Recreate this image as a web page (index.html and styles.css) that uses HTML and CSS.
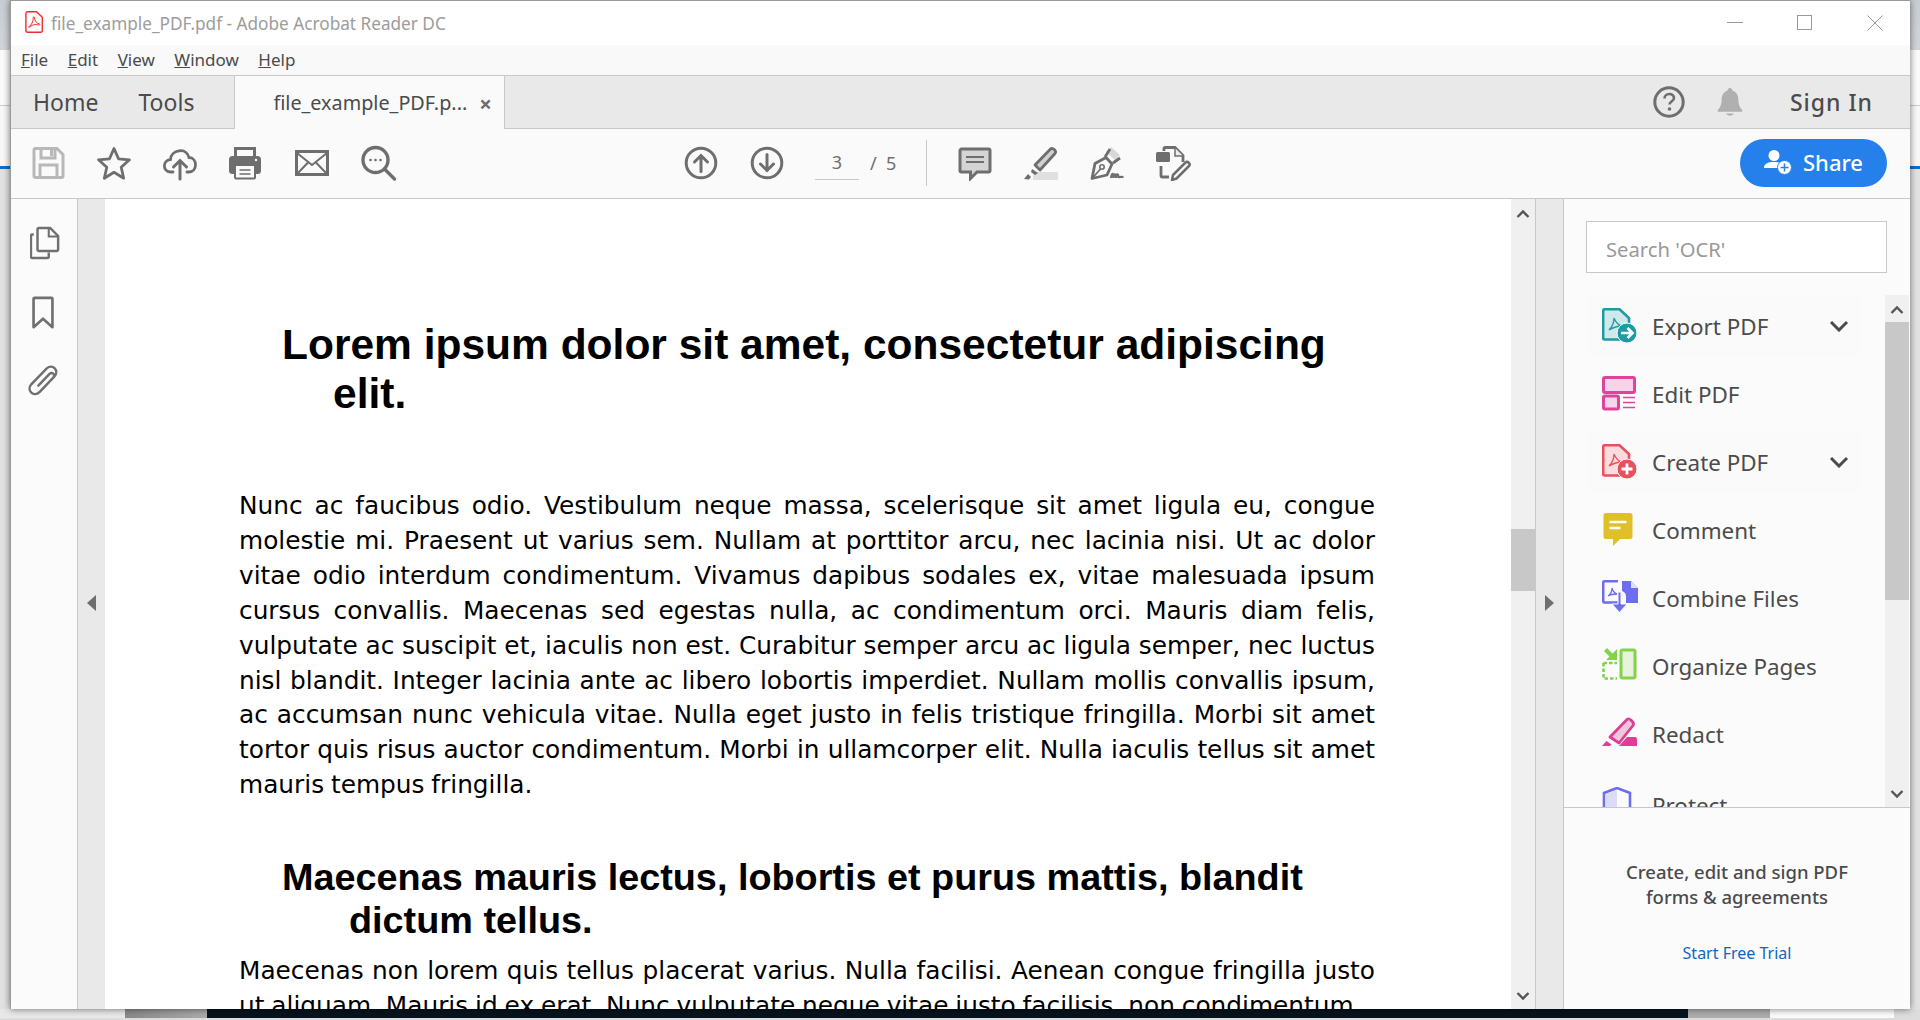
FILE: index.html
```html
<!DOCTYPE html>
<html lang="en">
<head>
    <meta charset="UTF-8">
    <title>file_example_PDF.pdf - Adobe Acrobat Reader DC</title>
    <link rel="stylesheet" href="styles.css">
</head>
<body>
    <div class="desk-left"></div>
    <div class="window">
        <div class="titlebar">
            <svg class="title-icon" viewBox="0 0 18 22"><path d="M2.5 .7h9l5.8 5.6v13.4a1.6 1.6 0 0 1-1.6 1.6H2.500a1.600 1.600 0 0 1-1.600-1.600V2.300A1.600 1.600 0 0 1 2.500 .7z" fill="#fff" stroke="#f02b2b" stroke-width="1.400"/><path d="M3.500 16c3-1.500 5-6 4.800-9.500 0-1 1.200-1 1.200 0 0 3.500 2.500 6 5 6.500 .8 .3 .3 1.300-.6 1-3.500-1-7.400-.2-10 2.800" fill="none" stroke="#f02b2b" stroke-width="1"/></svg>
            <span class="title-text">file_example_PDF.pdf - Adobe Acrobat Reader DC</span>
            <div class="win-btns">
                <svg viewBox="0 0 16 16"><path d="M0 7.500h16" stroke="#999" fill="none"/></svg>
                <svg viewBox="0 0 16 16"><rect x=".5" y=".5" width="14" height="14" stroke="#999" fill="none"/></svg>
                <svg viewBox="0 0 16 16"><path d="M.5 .5l15 15M15.500 .5l-15 15" stroke="#999" fill="none"/></svg>
            </div>
        </div>

        <div class="menubar">
            <span><u>F</u>ile</span>
            <span><u>E</u>dit</span>
            <span><u>V</u>iew</span>
            <span><u>W</u>indow</span>
            <span><u>H</u>elp</span>
        </div>

        <div class="tabbar">
            <span class="nav-tab">Home</span>
            <span class="nav-tab">Tools</span>
            <div class="doc-tab">
                <span>file_example_PDF.p...</span>
                <span class="doc-close">×</span>
            </div>
            <div class="tab-right">
                <svg class="help" viewBox="0 0 32 32"><circle cx="16" cy="16" r="14.200" fill="none" stroke="#6e6e6e" stroke-width="3"/><path d="M11.500 12.500c0-6 9.500-6 9.500-.5 0 3.500-4.500 3.500-4.500 6.500" fill="none" stroke="#6e6e6e" stroke-width="2.600"/><circle cx="16.500" cy="23" r="1.800" fill="#6e6e6e"/></svg>
                <svg class="bell" viewBox="0 0 28 32"><path d="M14 1c1.500 0 2.500 1 2.500 2.500 4.500 1.500 6.500 5 6.500 10 0 6 2 8.500 4 11 .6 1 0 2-1 2H2c-1 0-1.600-1-1-2 2-2.500 4-5 4-11 0-5 2-8.500 6.500-10C11.500 2 12.500 1 14 1z" fill="#b0b0b0"/><path d="M10 28.500h8c-.5 3-7.500 3-8 0z" fill="#b0b0b0"/></svg>
                <span class="sign-in">Sign In</span>
            </div>
        </div>

        <div class="toolbar">
            <svg class="tb-icon" viewBox="0 0 36 36"><path d="M5 3.500h22l6 6V31a1.500 1.500 0 0 1-1.500 1.500h-26A1.500 1.500 0 0 1 4 31V5a1.500 1.500 0 0 1 1-1.500z" fill="none" stroke="#b8b8b8" stroke-width="3"/><path d="M11 4v9h14V4M10 32V20h17v12" fill="none" stroke="#b8b8b8" stroke-width="3"/><path d="M20 5h3v6h-3z" fill="#b8b8b8"/></svg>
            <svg class="tb-icon" viewBox="0 0 36 36"><path d="M18 3.500l4.500 10.300 11 1-8.300 7.400 2.500 11L18 27.300l-9.700 5.900 2.500-11-8.300-7.400 11-1z" fill="none" stroke="#6e6e6e" stroke-width="2.800" stroke-linejoin="round"/></svg>
            <svg class="tb-icon" viewBox="0 0 36 36"><path d="M11 27H9c-8.500 0-9-11.500-.5-12.500C9 4.500 24.500 2 27 12.500c8.500 0 9 14.500-.5 14.500H25" fill="none" stroke="#6e6e6e" stroke-width="2.800" stroke-linecap="round"/><path d="M18 34V15.500M11.500 22l6.500-6.500 6.500 6.500" fill="none" stroke="#6e6e6e" stroke-width="3" stroke-linecap="round"/></svg>
            <svg class="tb-icon tb-print" viewBox="0 0 36 36"><path d="M8.500 12V3.500h19V12" fill="none" stroke="#6e6e6e" stroke-width="3"/><rect x="2" y="11" width="32" height="18" rx="3.500" fill="#6e6e6e"/><rect x="8" y="20" width="20" height="13.500" rx="1" fill="#fafafa" stroke="#6e6e6e" stroke-width="2"/><path d="M12.500 25h11M12.500 29h11" stroke="#6e6e6e" stroke-width="1.500"/><circle cx="29" cy="15" r="1.200" fill="#fafafa"/></svg>
            <svg class="tb-icon" viewBox="0 0 36 36"><rect x="2.500" y="6.500" width="31" height="23" fill="none" stroke="#6e6e6e" stroke-width="3"/><path d="M3 8l15 12L33 8M3 29l11.500-12M33 29L21.500 17" fill="none" stroke="#6e6e6e" stroke-width="2"/></svg>
            <svg class="tb-icon" viewBox="0 0 36 36"><circle cx="15.500" cy="15" r="12.500" fill="none" stroke="#6e6e6e" stroke-width="3.400"/><path d="M24.500 24l10 10" stroke="#6e6e6e" stroke-width="3.400" stroke-linecap="round"/><circle cx="10.500" cy="15" r="1.300" fill="#6e6e6e"/><circle cx="15.500" cy="15" r="1.300" fill="#6e6e6e"/><circle cx="20.500" cy="15" r="1.300" fill="#6e6e6e"/></svg>

            <div class="tb-nav">
                <svg class="tb-icon" viewBox="0 0 36 36"><circle cx="18" cy="18" r="14.800" fill="none" stroke="#6e6e6e" stroke-width="3"/><path d="M18 26.500V10.500M11.500 17l6.500-6.500 6.500 6.500" fill="none" stroke="#6e6e6e" stroke-width="3" stroke-linecap="round"/></svg>
                <svg class="tb-icon" viewBox="0 0 36 36"><circle cx="18" cy="18" r="14.800" fill="none" stroke="#6e6e6e" stroke-width="3"/><path d="M18 9.500V25.500M11.500 19l6.500 6.500 6.500-6.500" fill="none" stroke="#6e6e6e" stroke-width="3" stroke-linecap="round"/></svg>
            </div>
            <div class="page-no"><span class="page-cur">3</span><span class="page-all">/&nbsp;&nbsp;5</span></div>
            <div class="tb-sep"></div>
            <svg class="tb-icon" viewBox="0 0 36 36"><path d="M4.500 4h27A1.500 1.500 0 0 1 33 5.500v20a1.500 1.500 0 0 1-1.500 1.500H20l-6.500 6.500V27h-9A1.500 1.500 0 0 1 3 25.500v-20A1.500 1.500 0 0 1 4.500 4z" fill="#d4d4d4" stroke="#6e6e6e" stroke-width="3"/><path d="M9 12h18M9 17h18" stroke="#6e6e6e" stroke-width="2"/></svg>
            <svg class="tb-icon" viewBox="0 0 36 36"><rect x="10" y="27" width="25" height="8" fill="#e0e0e0"/><path d="M12 20L27.500 4c2-2 6.500 2 4.500 4.500L17 25l-5-5z" fill="#d0d0d0" stroke="#6e6e6e" stroke-width="2.800" stroke-linejoin="round"/><path d="M9 24l-1 3 4 3 3-2" fill="#6e6e6e"/><path d="M1 34l4-5 3 3 -2 2.500z" fill="#6e6e6e"/></svg>
            <svg class="tb-icon" viewBox="0 0 36 36"><path d="M3 33.500l3-15 11-6 6 6.500-5 11z" fill="none" stroke="#6e6e6e" stroke-width="2.800" stroke-linejoin="round"/><path d="M22 2l9 8-5 5-9-8z" fill="#d8d8d8"/><path d="M16 12l5-8M24 18l7-5" stroke="#6e6e6e" stroke-width="2.800"/><path d="M3.500 33l8-9" stroke="#6e6e6e" stroke-width="1.800"/><circle cx="13" cy="22" r="2.200" fill="none" stroke="#6e6e6e" stroke-width="1.600"/><path d="M22 33c1-6 2.500-5 2.500 0 .5-5 2.500-5 2.500 0 .5-5 2.500-5 2.500 0 .5-1.500 2-1 5-1" fill="none" stroke="#6e6e6e" stroke-width="2.200"/></svg>
            <svg class="tb-icon" viewBox="0 0 36 36"><path d="M9 6V3.500a1 1 0 0 1 1-1h10l8 8V17" fill="none" stroke="#6e6e6e" stroke-width="2.800"/><path d="M20 3v8h8" fill="#eee" stroke="#6e6e6e" stroke-width="1.500"/><rect x="1" y="7" width="14" height="10" rx="1.500" fill="#6e6e6e"/><path d="M6 21v10a1 1 0 0 0 1 1h7" fill="none" stroke="#6e6e6e" stroke-width="2.800"/><path d="M18 30L30.500 17.500c2-2 5.500 1.500 3.500 3.500L21.500 33.500 17 35z" fill="#fafafa" stroke="#6e6e6e" stroke-width="2.500" stroke-linejoin="round"/></svg>

            <button class="share">
                <svg viewBox="0 0 28 26"><circle cx="10" cy="6.500" r="5.500" fill="#fff"/><path d="M0 19c0-5 5-6 10-6s8 1 9 3c-2 .5-3.500 1.500-4 3z" fill="#fff"/><circle cx="20.500" cy="18.500" r="7" fill="#fff" stroke="#2680eb" stroke-width="1"/><path d="M20.500 14.500v8M16.500 18.500h8" stroke="#2680eb" stroke-width="1.500"/></svg>
                Share
            </button>
        </div>

        <div class="main">
            <div class="rail">
                <svg viewBox="0 0 32 36" class="rail-pages"><path d="M4 9H2.500A1.500 1.500 0 0 0 1 10.500v22A1.500 1.500 0 0 0 2.500 34h16a1.500 1.500 0 0 0 1.500-1.500V28" fill="none" stroke="#707070" stroke-width="2.600"/><path d="M9.500 2h12l8.500 8.500V25a1.500 1.500 0 0 1-1.500 1.500h-19A1.500 1.500 0 0 1 8 25V3.500A1.500 1.500 0 0 1 9.500 2z" fill="#fbfbfb" stroke="#707070" stroke-width="2.600"/><path d="M20 2.500V11h9" fill="none" stroke="#707070" stroke-width="2.200"/></svg>
                <svg viewBox="0 0 24 36" class="rail-mark"><path d="M3 2h18a1 1 0 0 1 1 1v30l-10-9-10 9V3a1 1 0 0 1 1-1z" fill="none" stroke="#707070" stroke-width="2.800" stroke-linejoin="round"/></svg>
                <svg viewBox="0 0 32 34" class="rail-clip"><path d="M11 22L23 9.500c3-3 6.500 1 4 4L12.500 28.500C6 35-2 27 3.500 20.500L20 3.500c6-5 14 2 8 9" fill="none" stroke="#707070" stroke-width="2.600" stroke-linecap="round"/></svg>
            </div>
            <div class="gutter"><span class="tri tri-left"></span></div>

            <div class="page">
                <h1>Lorem ipsum dolor sit amet, consectetur adipiscing<br>elit.</h1>
                <p class="first">Nunc ac faucibus odio. Vestibulum neque massa, scelerisque sit amet ligula eu, congue molestie mi. Praesent ut varius sem. Nullam at porttitor arcu, nec lacinia nisi. Ut ac dolor vitae odio interdum condimentum. Vivamus dapibus sodales ex, vitae malesuada ipsum cursus convallis. Maecenas sed egestas nulla, ac condimentum orci. Mauris diam felis, vulputate ac suscipit et, iaculis non est. Curabitur semper arcu ac ligula semper, nec luctus nisl blandit. Integer lacinia ante ac libero lobortis imperdiet. Nullam mollis convallis ipsum, ac accumsan nunc vehicula vitae. Nulla eget justo in felis tristique fringilla. Morbi sit amet tortor quis risus auctor condimentum. Morbi in ullamcorper elit. Nulla iaculis tellus sit amet mauris tempus fringilla.</p>
                <h2>Maecenas mauris lectus, lobortis et purus mattis, blandit<br>dictum tellus.</h2>
                <p class="second">Maecenas non lorem quis tellus placerat varius. Nulla facilisi. Aenean congue fringilla justo ut aliquam. Mauris id ex erat. Nunc vulputate neque vitae justo facilisis, non condimentum</p>
            </div>

            <div class="page-scroll">
                <svg viewBox="0 0 14 10" class="arrow"><path d="M1.500 8L7 2.500 12.500 8" fill="none" stroke="#555" stroke-width="2.400"/></svg>
                <div class="page-thumb"></div>
                <svg viewBox="0 0 14 10" class="arrow arrow-end"><path d="M1.500 2L7 7.500 12.500 2" fill="none" stroke="#555" stroke-width="2.400"/></svg>
            </div>
            <div class="gutter2"><span class="tri tri-right"></span></div>

            <div class="tools">
                <div class="search-wrap"><input class="search" type="text" placeholder="Search 'OCR'"></div>
                <div class="tool-area">
                    <div class="tool-list">
                        <div class="tool tool-exp">
                            <svg viewBox="0 0 36 36"><path d="M2.500 1.200h15L27 10v20a1.500 1.500 0 0 1-1.500 1.500h-23A1.500 1.500 0 0 1 1.200 30V2.500A1.500 1.500 0 0 1 2.500 1.200z" fill="#cfe8ea" stroke="#1f9aa5" stroke-width="2.600"/><path d="M7 22c3-3 5-7 5-12 2 5 4 7 8 8-4 0-8 1-13 4z" fill="none" stroke="#1f9aa5" stroke-width="1.300"/><circle cx="25" cy="25" r="10" fill="#1f9aa5" stroke="#fbfbfb"/><path d="M19 25h11M25.500 20l5 5-5 5" fill="none" stroke="#fff" stroke-width="2.600"/></svg>
                            <span>Export PDF</span>
                            <svg class="chev" viewBox="0 0 20 12"><path d="M2 2l8 8 8-8" fill="none" stroke="#4b4b4b" stroke-width="3"/></svg>
                        </div>
                        <div class="tool">
                            <svg viewBox="0 0 36 36"><rect x="1.500" y="1.500" width="31" height="15" rx="1.500" fill="#f6d5e8" stroke="#e0439c" stroke-width="3"/><rect x="1.500" y="20" width="15" height="13" rx="1.500" fill="#f6d5e8" stroke="#e0439c" stroke-width="3"/><path d="M21 21.500h12M21 26.500h12M21 31.500h12" stroke="#e0439c" stroke-width="1.400"/></svg>
                            <span>Edit PDF</span>
                        </div>
                        <div class="tool tool-exp">
                            <svg viewBox="0 0 36 36"><path d="M2.500 1.200h15L27 10v20a1.500 1.500 0 0 1-1.500 1.500h-23A1.500 1.500 0 0 1 1.200 30V2.500A1.500 1.500 0 0 1 2.500 1.200z" fill="#f9dcde" stroke="#e8505b" stroke-width="2.600"/><path d="M7 22c3-3 5-7 5-12 2 5 4 7 8 8-4 0-8 1-13 4z" fill="none" stroke="#e8505b" stroke-width="1.300"/><circle cx="25" cy="25" r="10" fill="#e8505b" stroke="#fbfbfb"/><path d="M25 19.500v11M19.500 25h11" fill="none" stroke="#fff" stroke-width="2.800"/></svg>
                            <span>Create PDF</span>
                            <svg class="chev" viewBox="0 0 20 12"><path d="M2 2l8 8 8-8" fill="none" stroke="#4b4b4b" stroke-width="3"/></svg>
                        </div>
                        <div class="tool">
                            <svg viewBox="0 0 36 36"><path d="M4 1h24a2.500 2.500 0 0 1 2.500 2.500v21A2.500 2.500 0 0 1 28 27H18l-7 7v-7H4a2.500 2.500 0 0 1-2.500-2.500v-21A2.500 2.500 0 0 1 4 1z" fill="#dfbf2a"/><path d="M7.500 10h17M7.500 16h11" stroke="#fff" stroke-width="2.400"/></svg>
                            <span>Comment</span>
                        </div>
                        <div class="tool">
                            <svg viewBox="0 0 36 36"><path d="M2.500 1H15v7h5v15H9v-1H2.500A1.500 1.500 0 0 1 1 20.500V2.500A1.500 1.500 0 0 1 2.500 1z" fill="#fbfbfb"/><path d="M16 22.500H2.500A1.500 1.500 0 0 1 1.200 21V2.500A1.500 1.500 0 0 1 2.500 1.200H16" fill="none" stroke="#6d6df0" stroke-width="2.600"/><path d="M6 16c3-2 4-5 4-8 1 4 2.500 5 5 6-3 0-6 0-9 2z" fill="none" stroke="#6d6df0" stroke-width="1.300"/><path d="M20 1h9l7 7v15H24v-6c0-3-1-5-4-6z" fill="#6d6df0"/><path d="M29 1v7h7" fill="#dfe0fb"/><path d="M19 12v12h6l-7.500 8.500L10 24h6V12z" fill="#6d6df0" stroke="#fbfbfb"/></svg>
                            <span>Combine Files</span>
                        </div>
                        <div class="tool">
                            <svg viewBox="0 0 36 36"><rect x="19" y="2" width="14" height="28" rx="1.500" fill="#e8f3dd" stroke="#82d24a" stroke-width="3"/><path d="M15 1v11H4l3.500-3.500L2 3l3-3 5.500 5.500z" fill="#82d24a"/><path d="M1.500 15v15.500H15M1.500 15H15" fill="none" stroke="#82d24a" stroke-width="2.600" stroke-dasharray="3.500 2"/></svg>
                            <span>Organize Pages</span>
                        </div>
                        <div class="tool">
                            <svg viewBox="0 0 36 36"><path d="M8 21L25 3.500c2-2 8 3 6 6L17 27z" fill="#f2c7dd" stroke="#de3f96" stroke-width="2.800" stroke-linejoin="round"/><path d="M17 30l8-9h8a2 2 0 0 1 2 2v7z" fill="#de3f96"/><path d="M0 30l4.500-5 5 3.500L8 30z" fill="#de3f96"/></svg>
                            <span>Redact</span>
                        </div>
                        <div class="tool tool-last">
                            <svg viewBox="0 0 36 36"><path d="M15 1L2 6v18c0 6 7 10 13 12 6-2 13-6 13-12V6z" fill="#fbfbfb" stroke="#6d6df0" stroke-width="2.600"/><path d="M15 3L3.500 7v17c0 5 6 8 11.500 10z" fill="#dcdcfa"/></svg>
                            <span>Protect</span>
                        </div>
                    </div>
                    <div class="tool-scroll">
                        <svg viewBox="0 0 14 10" class="arrow"><path d="M1.500 8L7 2.500 12.500 8" fill="none" stroke="#555" stroke-width="2.400"/></svg>
                        <div class="tool-thumb"></div>
                        <svg viewBox="0 0 14 10" class="arrow arrow-end"><path d="M1.500 2L7 7.500 12.500 2" fill="none" stroke="#555" stroke-width="2.400"/></svg>
                    </div>
                </div>
                <div class="promo">
                    <div class="promo-text">Create, edit and sign PDF<br>forms &amp; agreements</div>
                    <div class="promo-link">Start Free Trial</div>
                </div>
            </div>
        </div>
    </div>
    <div class="desk-right"></div>
    <div class="taskbar">
        <div class="tk-a"></div>
        <div class="tk-b"></div>
        <div class="tk-c"></div>
        <div class="tk-d"></div>
        <div class="tk-e"></div>
        <div class="tk-f"></div>
    </div>
</body>
</html>
```

FILE: styles.css
```css
*{
    box-sizing:border-box;
    padding:0;
    margin:0;
}
body{
    width:1920px;
    height:1020px;
    overflow:hidden;
    display:grid;
    grid-template-columns:10px 1900px 10px;
    grid-template-rows:1009px 11px;
    font-family:"Noto Sans","Open Sans",sans-serif;
    color:#4b4b4b;
    background:#ddd;
}
.desk-left,.desk-right{
    background:linear-gradient(#c9ced4 0,#d2d6db 50px,#fbfbfb 50px,#fbfbfb 105px,#ccc 105px,#ccc 106px,#f8f8f8 106px,#f8f8f8 166px,#0a6fd6 166px,#0a6fd6 169px,#e2e2e2 169px);
}
.window{
    position:relative;
    display:flex;
    flex-direction:column;
    background:#fafafa;
    border-left:1px solid #9a9a9a;
    border-top:1px solid #9a9a9a;
    box-shadow:0 0 7px rgba(0,0,0,.55);
    overflow:hidden;
}

/* title */
.titlebar{
    height:44px;
    background:#fff;
    display:flex;
    align-items:center;
    padding-left:14px;
}
.title-icon{
    width:18px;
    height:22px;
    margin-bottom:3px;
}
.title-text{
    margin-left:8px;
    font-size:17.200px;
    color:#9c9c9c;
}
.win-btns{
    margin-left:auto;
    display:flex;
    gap:54px;
    padding-right:27px;
    padding-bottom:1px;
}
.win-btns svg{
    width:16px;
    height:16px;
}

/* menu */
.menubar{
    height:30px;
    background:#f9f9f9;
    display:flex;
    align-items:center;
    gap:19.500px;
    padding-left:10px;
    padding-bottom:1px;
    font-size:17px;
    color:#4b4b4b;
}

/* tabs */
.tabbar{
    height:54px;
    background:#e9e9e9;
    border-top:1px solid #c8c8c8;
    border-bottom:1px solid #c8c8c8;
    display:flex;
    align-items:center;
    padding-left:22px;
    font-size:23px;
}
.nav-tab{
    margin-right:40px;
    margin-bottom:1px;
}
.doc-tab{
    height:53px;
    width:271px;
    margin-bottom:-1px;
    background:#fafafa;
    border-left:1px solid #c8c8c8;
    border-right:1px solid #c8c8c8;
    display:flex;
    align-items:center;
    padding-left:38px;
    font-size:19.800px;
}
.doc-close{
    margin-left:12px;
    font-size:22px;
    font-weight:700;
    color:#6e6e6e;
}
.tab-right{
    margin-left:auto;
    display:flex;
    align-items:center;
    padding-right:37px;
}
.help{
    width:32px;
    height:32px;
}
.bell{
    width:26px;
    height:30px;
    margin-left:32px;
}
.sign-in{
    margin-left:47px;
    font-weight:500;
    letter-spacing:1px;
}

/* toolbar */
.toolbar{
    height:70px;
    border-bottom:1px solid #c8c8c8;
    display:flex;
    align-items:center;
    gap:30px;
    padding-left:19px;
    padding-bottom:2px;
}
.tb-icon{
    width:36px;
    height:36px;
    flex:none;
}
.tb-print{
    margin-left:-1px;
    margin-right:1px;
}
.tb-nav{
    display:flex;
    gap:30px;
    margin-left:257px;
}
.page-no{
    display:flex;
    align-items:center;
    font-size:18px;
    color:#6e6e6e;
}
.page-cur{
    width:44px;
    height:34px;
    line-height:32px;
    text-align:center;
    border-bottom:1px solid #c8c8c8;
}
.page-all{
    margin-left:11px;
}
.tb-sep{
    width:1px;
    height:46px;
    background:#c8c8c8;
}
.share{
    margin-left:auto;
    margin-right:23px;
    width:147px;
    height:48px;
    border:0;
    border-radius:24px;
    padding-bottom:2px;
    background:#2680eb;
    color:#fff;
    font-family:inherit;
    font-size:22px;
    font-weight:500;
    display:flex;
    align-items:center;
    justify-content:center;
    gap:11px;
}
.share svg{
    width:28px;
    height:26px;
}

/* main area */
.main{
    flex:1;
    display:flex;
    min-height:0;
}
.rail{
    width:67px;
    flex:none;
    background:#fbfbfb;
    border-right:1px solid #c8c8c8;
    display:flex;
    flex-direction:column;
    align-items:center;
    padding-top:26px;
}
.rail-pages{
    width:30px;
    height:36px;
    margin-left:2px;
}
.rail-mark{
    width:24px;
    height:34px;
    margin-top:35px;
    margin-right:2px;
}
.rail-clip{
    width:30px;
    height:32px;
    margin-top:35px;
    margin-right:2px;
}
.gutter,.gutter2{
    flex:none;
    background:#e9e9e9;
    display:flex;
    align-items:center;
    justify-content:center;
    padding-bottom:2px;
}
.gutter{
    width:27px;
}
.gutter2{
    border-right:1px solid #c8c8c8;
    width:28px;
}
.tri{
    width:0;
    height:0;
    border-top:8px solid transparent;
    border-bottom:8px solid transparent;
}
.tri-left{
    border-right:9px solid #6e6e6e;
}
.tri-right{
    border-left:9px solid #6e6e6e;
}

/* pdf page */
.page{
    width:1406px;
    flex:none;
    background:#fff;
    color:#000;
    padding:121px 136px 0 134px;
    overflow:hidden;
}
h1,h2{
    font-family:"Liberation Sans",Arial,sans-serif;
    font-weight:700;
    margin-left:43px;
}
h1{
    font-size:42.500px;
    line-height:49px;
    padding-left:51px;
    text-indent:-51px;
}
h2{
    font-size:37.800px;
    line-height:43px;
    margin-top:53px;
    padding-left:67px;
    text-indent:-67px;
}
.page p{
    font-family:"DejaVu Sans",sans-serif;
    font-size:24.800px;
    word-spacing:-1px;
    line-height:34.900px;
    text-align:justify;
}
.first{
    margin-top:71px;
}
.second{
    margin-top:12px;
}

/* scrollbars */
.page-scroll{
    width:25px;
    flex:none;
    background:#f0f0f0;
    border-right:1px solid #c8c8c8;
    display:flex;
    flex-direction:column;
    align-items:center;
}
.arrow{
    flex:none;
    width:14px;
    height:10px;
    margin-top:10px;
}
.arrow-end{
    margin-top:auto;
    margin-bottom:8px;
}
.page-thumb{
    width:100%;
    height:62px;
    margin-top:310px;
    background:#c8c8c8;
}

/* tools pane */
.tools{
    flex:1;
    min-width:0;
    display:flex;
    flex-direction:column;
    background:#fbfbfb;
}
.search-wrap{
    height:96px;
    padding:22px 23px 0 22px;
    flex:none;
}
.search{
    display:block;
    width:100%;
    height:52px;
    background:#fff;
    border:1px solid #c8c8c8;
    padding:3px 0 0 19px;
    font-family:inherit;
    font-size:20.200px;
    outline:none;
}
.search::placeholder{
    color:#999;
    opacity:1;
}
.tool-area{
    height:513px;
    flex:none;
    display:flex;
    border-bottom:1px solid #c8c8c8;
}
.tool-list{
    flex:1;
    min-width:0;
    overflow:hidden;
    display:flex;
    flex-direction:column;
    gap:6px;
    padding-left:22px;
    padding-right:23px;
}
.tool{
    height:62px;
    flex:none;
    display:flex;
    align-items:center;
    padding-left:16px;
    font-size:22.400px;
    gap:14px;
}
.tool-last{
    margin-top:3px;
}
.tool > svg:first-child{
    width:36px;
    height:36px;
    flex:none;
}
.tool-exp{
    background:#fafafa;
}
.chev{
    width:20px;
    height:12px;
    margin-left:auto;
    margin-right:13px;
}
.tool-scroll{
    width:24px;
    flex:none;
    margin-right:1px;
    background:#f0f0f0;
    display:flex;
    flex-direction:column;
    align-items:center;
}
.tool-thumb{
    width:100%;
    height:278px;
    margin-top:7px;
    background:#c8c8c8;
}
.promo{
    flex:1;
    text-align:center;
    padding-top:51px;
}
.promo-text{
    font-size:18.500px;
    line-height:25px;
    font-weight:500;
}
.promo-link{
    margin-top:33px;
    font-size:16px;
    color:#0d66c2;
}

/* what shows behind the window */
.taskbar{
    grid-column:1 / 4;
    display:flex;
    height:9px;
}
.tk-a{
    width:125px;
    background:#e8e8e8;
}
.tk-b{
    width:82px;
    background:linear-gradient(90deg,#8a8a8a,#aaa);
}
.tk-c{
    width:1481px;
    background:#07131c;
}
.tk-d{
    width:82px;
    background:#adadad;
}
.tk-e{
    width:124px;
    background:#fbfbfb;
}
.tk-f{
    flex:1;
    background:#ddd;
}
```
